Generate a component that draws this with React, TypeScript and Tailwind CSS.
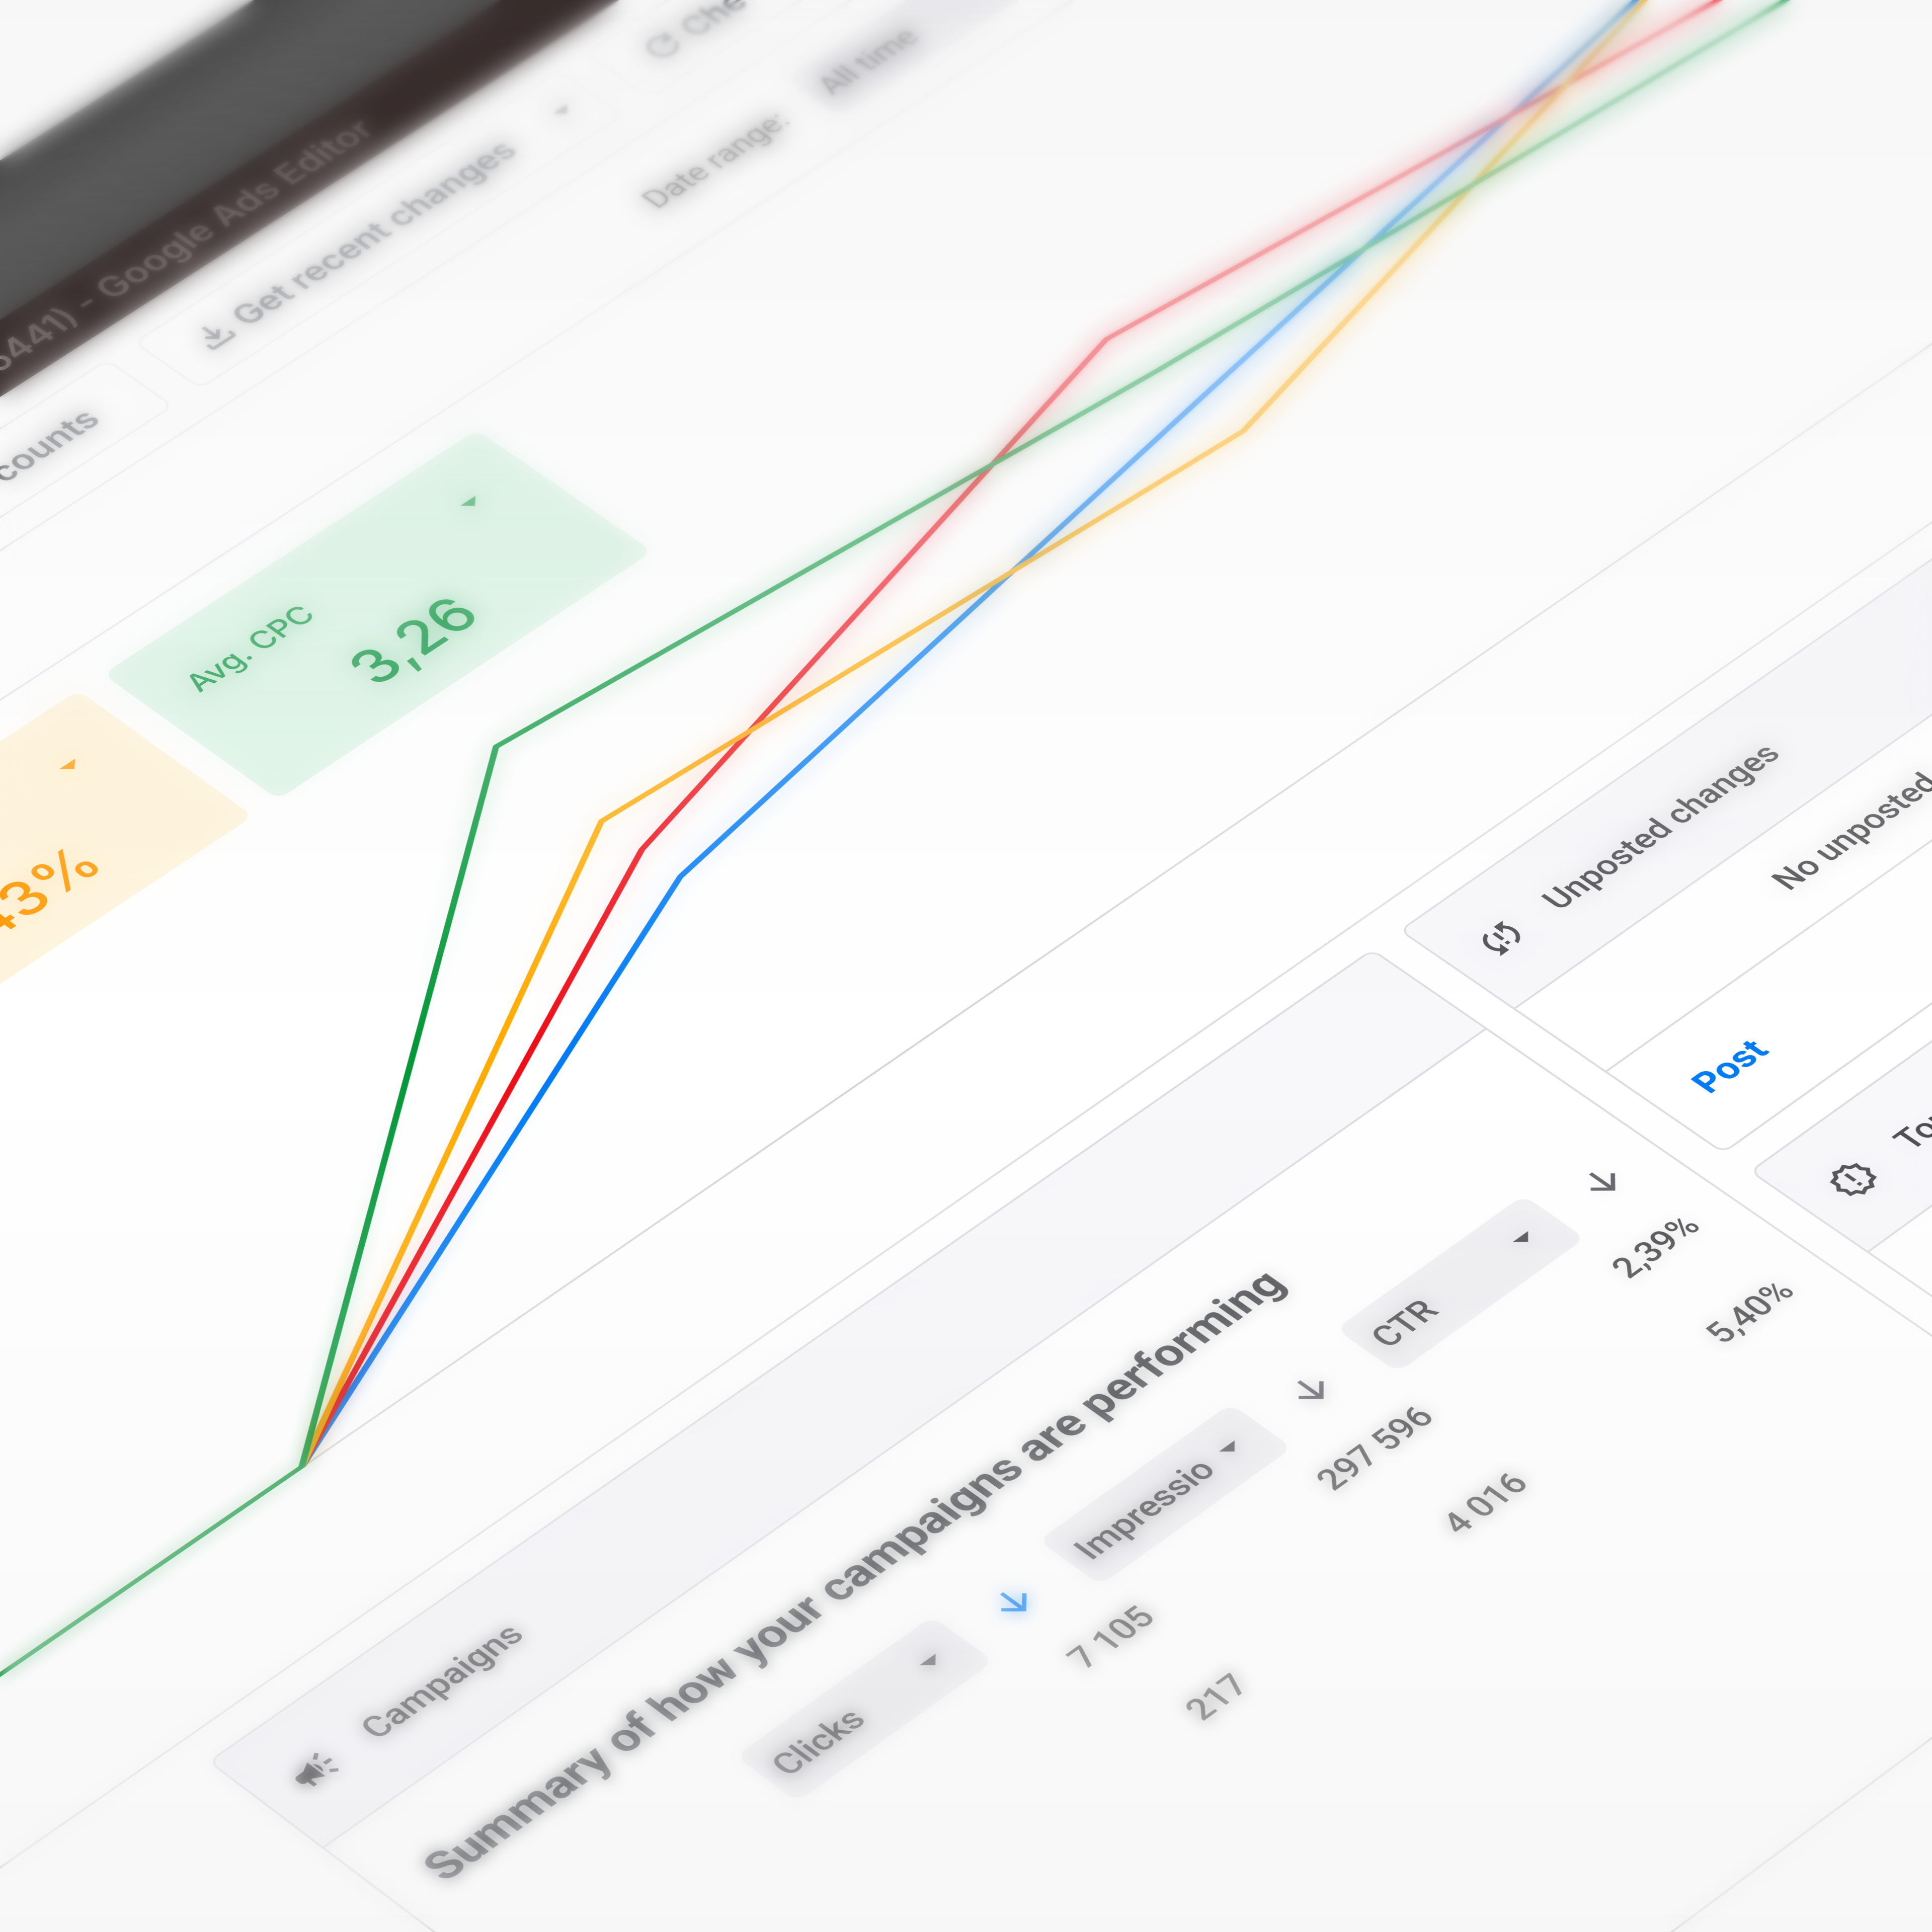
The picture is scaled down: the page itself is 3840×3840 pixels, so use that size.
import { useId } from "react";
import type { ReactNode } from "react";
import {
  MdArrowDownward,
  MdArrowDropDown,
  MdCampaign,
  MdOutlineFileDownload,
  MdOutlineNewReleases,
  MdRefresh,
  MdSyncProblem,
} from "react-icons/md";

function MenuBar() {
  return <div className="h-[318px] bg-linear-to-b from-[#4c4c4c] via-[#5e5e5e] to-[#585858]" />;
}

function TitleBar() {
  return (
    <header className="flex h-[152px] items-center justify-end bg-[#3b302f] pr-[2258px]">
      <h1 className="font-['Inter'] text-[74px] font-semibold text-[#aca3a3]">(6441) - Google Ads Editor</h1>
    </header>
  );
}

function ToolButton({ icon, children, menu, className }: { icon?: ReactNode; children: string; menu?: boolean; className: string }) {
  return (
    <button
      type="button"
      className={`flex h-[176px] items-center gap-3 rounded-[24px] border-4 border-[#e6e6ec] font-['Inter'] text-[70px] font-semibold whitespace-nowrap text-[#5b5d64] ${className}`}
    >
      {icon}
      <span>{children}</span>
      {menu && <MdArrowDropDown className="ml-auto size-[88px]" />}
    </button>
  );
}

function Toolbar() {
  return (
    <nav className="flex h-[300px] items-center gap-[62px] border-b-4 border-[#e4e4ea] pl-[2350px]">
      <ToolButton className="w-[540px] justify-end pr-[112px]">Accounts</ToolButton>
      <ToolButton className="w-[1035px] pr-6 pl-[66px]" menu icon={<MdOutlineFileDownload className="size-[88px]" />}>
        Get recent changes
      </ToolButton>
      <ToolButton className="w-[1000px] pr-6 pl-[66px]" icon={<MdRefresh className="size-[88px]" />}>
        Check changes
      </ToolButton>
    </nav>
  );
}

function Dropdown({ label, value, className }: { label: string; value: string; className: string }) {
  return (
    <span className={`relative block ${className}`}>
      <select
        aria-label={label}
        defaultValue={value}
        className="block h-[146px] w-full appearance-none rounded-[24px] bg-[#f0f0f3] pl-[28px] text-[66px]"
      >
        <option>{value}</option>
      </select>
      <MdArrowDropDown className="pointer-events-none absolute top-[29px] right-[30px] size-[88px]" />
    </span>
  );
}

function FilterBar() {
  return (
    <div className="flex h-[285px] items-center border-b-4 border-[#e4e4ea] pl-[3850px] text-[66px] text-[#2c2c2e]">
      <span className="w-[406px] whitespace-nowrap">Date range:</span>
      <Dropdown label="Date range" value="All time" className="w-[900px]" />
    </div>
  );
}

function MetricTile({ label, value, className }: { label: string; value: string; className: string }) {
  return (
    <button type="button" className={`flex h-[450px] w-[890px] flex-col rounded-[24px] font-['Inter'] font-medium ${className}`}>
      <span className="flex h-[264px] w-full items-center justify-between pr-[94px] pl-[86px] text-[62px]">
        {label}
        <MdArrowDropDown className="size-[88px]" />
      </span>
      <span className="w-full pr-3 text-center text-[118px] leading-[112px]">{value}</span>
    </button>
  );
}

const series = [
  { name: "Clicks", color: "#007bf5", points: "-3400,-388 -2133,-388 -710,-972 773,-1205 2091,-1409 2500,-1472" },
  { name: "Impressions", color: "#ed0e18", points: "-3400,-388 -2133,-388 -710,-1068 773,-1436 2196,-1303 2500,-1275" },
  { name: "CTR", color: "#ffab00", points: "-3400,-388 -2133,-388 -710,-1169 773,-1092 2102,-1398 2500,-1490" },
  { name: "Avg. CPC", color: "#06973a", points: "-3400,-388 -2133,-388 -710,-1435 773,-1313 2282,-1216 2500,-1202" },
];

function PerformanceChart() {
  const title = useId();
  return (
    <svg viewBox="-3400 -1605 5900 1220" className="block h-[1220px] w-full" role="img" aria-labelledby={title}>
      <title id={title}>Performance over time</title>
      <line x1="-3400" x2="2500" y1="-388" y2="-388" stroke="#d6d6d9" strokeWidth="4" />
      {series.map((s) => (
        <polyline key={s.name} points={s.points} fill="none" stroke={s.color} strokeWidth="11" strokeLinejoin="bevel" />
      ))}
    </svg>
  );
}

function Overview() {
  return (
    <section className="h-[2067px] border-b-4 border-[#dedee3] pt-[76px]">
      <div className="flex gap-[58px] pl-[1386px]">
        <MetricTile label="CTR" value="2,43%" className="bg-[#fff5de] text-[#ff9800]" />
        <MetricTile label="Avg. CPC" value="3,26" className="bg-[#e2f6ea] text-[#0f9542]" />
      </div>
      <PerformanceChart />
    </section>
  );
}

function Card({ icon, title, children, className }: { icon: ReactNode; title: string; children: ReactNode; className?: string }) {
  return (
    <section className={`overflow-hidden rounded-[22px] border-4 border-[#dcdce1] ${className ?? ""}`}>
      <header className="flex h-[274px] items-center gap-[74px] border-b-4 border-[#dcdce1] bg-[#f8f8fb] pl-[62px] text-[66px] font-medium">
        {icon}
        <h2>{title}</h2>
      </header>
      {children}
    </section>
  );
}

function MetricHeader({ value, active, className }: { value: string; active?: boolean; className: string }) {
  return (
    <th className={`p-0 font-medium ${className}`}>
      <div className="flex items-center justify-end gap-[73px]">
        <div className="shrink-0 text-left">
          <Dropdown label="Metric" value={value} className="w-[448px]" />
        </div>
        <button type="button" aria-label={`Sort by ${value}`} className={active ? "text-[#007bf5]" : "text-[#5c5c66]"}>
          <MdArrowDownward className="size-[88px]" />
        </button>
      </div>
    </th>
  );
}

const rows = [
  ["7 105", "297 596", "2,39%"],
  ["217", "4 016", "5,40%"],
];

function CampaignsCard() {
  return (
    <Card icon={<MdCampaign className="size-[88px]" />} title="Campaigns" className="h-[1966px] w-[2699px]">
      <div className="pt-[106px] pr-[80px] pl-[84px]">
        <h3 className="mb-[100px] text-[88px] leading-[120px] font-bold whitespace-nowrap text-[#4c4f53]">
          Summary of how your campaigns are performing
        </h3>
        <table className="w-full table-fixed border-collapse text-right text-[66px] font-medium">
          <colgroup>
            <col />
            <col className="w-[653px]" />
            <col className="w-[636px]" />
          </colgroup>
          <thead>
            <tr>
              <MetricHeader value="Clicks" active className="pr-[100px]" />
              <MetricHeader value="Impressio" className="pr-[60px]" />
              <MetricHeader value="CTR" className="" />
            </tr>
          </thead>
          <tbody>
            {rows.map((row) => (
              <tr key={row[0]} className="h-[220px]">
                {row.map((cell) => (
                  <td key={cell} className="p-0 pr-1 pb-6 align-middle">
                    {cell}
                  </td>
                ))}
              </tr>
            ))}
          </tbody>
        </table>
      </div>
    </Card>
  );
}

function UnpostedCard() {
  return (
    <Card icon={<MdSyncProblem className="size-[88px]" />} title="Unposted changes">
      <p className="flex h-[218px] items-center justify-center border-b-4 border-[#dcdce1] text-[66px] font-medium">No unposted changes</p>
      <div className="flex h-[274px] items-center pl-[82px]">
        <button type="button" className="font-['Inter'] text-[68px] font-bold text-[#007bf5]">
          Post
        </button>
      </div>
    </Card>
  );
}

function AlertsCard() {
  return (
    <Card icon={<MdOutlineNewReleases className="size-[88px]" />} title="Top recommendations">
      <div className="h-[800px]" />
    </Card>
  );
}

export default function App() {
  return (
    <main className="relative h-screen w-full overflow-hidden bg-white font-['Roboto',sans-serif] text-[#4a4a4d]">
      <div className="absolute top-0 left-0 w-[5900px] origin-top-left bg-white [transform:matrix3d(0.8645,-0.5415,0,0.00001631,0.7781,0.5364,0,-0.000016555,0,0,1,0,2729,1888,0,1)_translate(-3400px,-3187px)]">
        <MenuBar />
        <TitleBar />
        <Toolbar />
        <FilterBar />
        <Overview />
        <div className="flex items-start gap-[64px] pt-[62px] pl-[702px]">
          <CampaignsCard />
          <div className="flex w-[1724px] flex-col gap-[60px]">
            <UnpostedCard />
            <AlertsCard />
          </div>
        </div>
      </div>
      <div className="pointer-events-none absolute inset-x-0 top-0 h-[35%] backdrop-blur-[5px] [mask-image:linear-gradient(to_bottom,rgb(0_0_0/0.95),rgb(0_0_0/0.6)_40%,transparent)]" />
      <div className="pointer-events-none absolute inset-x-0 top-0 h-[54%] backdrop-blur-[24px] [mask-image:linear-gradient(to_bottom,rgb(0_0_0/0.84),rgb(0_0_0/0.6)_38%,rgb(0_0_0/0.3)_74%,transparent)]" />
      <div className="pointer-events-none absolute inset-x-0 bottom-0 h-[44%] backdrop-blur-[16px] [mask-image:linear-gradient(to_bottom,transparent,rgb(0_0_0/0.3)_32%,rgb(0_0_0/0.55)_64%,rgb(0_0_0/0.7))]" />
      <div className="pointer-events-none absolute inset-0 bg-linear-to-b from-black/3 via-transparent via-55% to-black/3" />
    </main>
  );
}
